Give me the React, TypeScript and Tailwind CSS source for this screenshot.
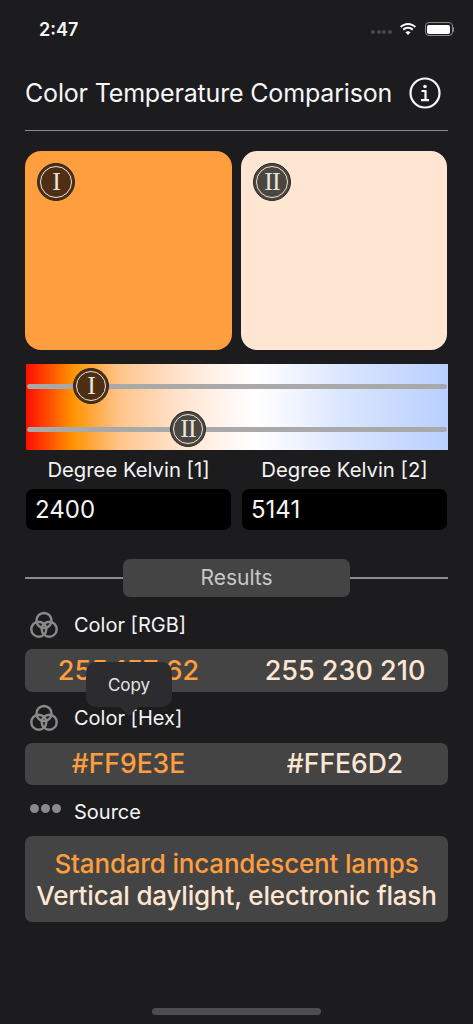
import { ReactNode } from 'react';

const ORANGE = 'text-[#ff9e3e]';
const CREAM = 'text-[#ffe6d2]';

function Badge({ label, size, bg }: { label: string; size: string; bg: string }) {
  return (
    <div className={`${size} ${bg} rounded-full border-[1.5px] border-[#2a2520] flex items-center justify-center shrink-0`}>
      <div className="w-[88%] h-[88%] rounded-full border-[1.5px] border-[#e8e4df] flex items-center justify-center">
        <span className="font-['Liberation_Serif',serif] text-[26px] leading-none text-[#e8e4df] tracking-[-1px]">{label}</span>
      </div>
    </div>
  );
}

function Swatch({ color, label, badge }: { color: string; label: string; badge: string }) {
  return (
    <div className={`h-[199px] rounded-[16px] ${color} pt-[12px] pl-[12px]`}>
      <Badge label={label} size="w-[38px] h-[38px]" bg={badge} />
    </div>
  );
}

function Slider({ label, left, badge }: { label: string; left: string; badge: string }) {
  return (
    <div className="relative h-[5px] rounded-full bg-[#a9a9a9] mx-[1px]">
      <div className={`absolute top-[-16px] ${left}`}>
        <Badge label={label} size="w-[36px] h-[36px]" bg={badge} />
      </div>
    </div>
  );
}

function VennIcon() {
  return (
    <svg width="28" height="28" viewBox="0 0 28 28" fill="none" stroke="#8a8a8a" strokeWidth="2.4">
      <circle cx="14" cy="9.500" r="7.500" />
      <circle cx="8.800" cy="18.200" r="7.500" />
      <circle cx="19.200" cy="18.200" r="7.500" />
    </svg>
  );
}

function DotsIcon() {
  return (
    <div className="flex gap-[2px] w-[32px] pb-[7px]">
      <div className="w-[9px] h-[9px] rounded-full bg-[#8a8a8a]" />
      <div className="w-[9px] h-[9px] rounded-full bg-[#8a8a8a]" />
      <div className="w-[9px] h-[9px] rounded-full bg-[#8a8a8a]" />
    </div>
  );
}

function SectionLabel({ icon, children, height }: { icon: ReactNode; children: ReactNode; height: string }) {
  return (
    <div className={`flex items-center ${height}`}>
      <div className="w-[49px] pl-[5px] flex items-center">{icon}</div>
      <span className="text-[20px] text-[#f4f4f4]">{children}</span>
    </div>
  );
}

function ValueRow({ left, right, height, size }: { left: string; right: string; height: string; size: string }) {
  return (
    <div className={`grid grid-cols-[207px_206px] justify-between items-center ${height} ${size} font-[450] rounded-[7px] bg-[#444444]`}>
      <span className={`${ORANGE} text-center`}>{left}</span>
      <span className={`${CREAM} text-center`}>{right}</span>
    </div>
  );
}

export default function App() {
  return (
    <div className="relative w-[473px] h-[1024px] bg-[#1c1c1e] overflow-hidden font-['Inter',sans-serif] text-white">
      {/* Status bar */}
      <div className="flex items-center justify-between h-[58px] pl-[39px] pr-[19px]">
        <span className="text-[18px] font-semibold text-[#f5f5f5]">2:47</span>
        <div className="flex items-center gap-[8px]">
          <div className="flex gap-[1.500px] mr-[-1px] mt-[5px]">
            {[0, 1, 2, 3].map((i) => (
              <div key={i} className="w-[4px] h-[4px] rounded-full bg-[#4a4a4c]" />
            ))}
          </div>
          <svg width="18" height="14" viewBox="0 0 19 14" fill="#ffffff">
            <path d="M9.500 2.900c2.700 0 5.100 1 7 2.800l1.400-1.500C15.700 2 12.700.7 9.500.7S3.300 2 1.100 4.200l1.400 1.500c1.900-1.800 4.300-2.800 7-2.800z" />
            <path d="M9.500 6.800c1.600 0 3.100.6 4.200 1.700l1.500-1.500C13.700 5.500 11.700 4.700 9.500 4.700S5.300 5.500 3.800 7l1.500 1.500C6.400 7.400 7.900 6.800 9.500 6.800z" />
            <path d="M9.500 13.300l2.700-2.900c-.7-.7-1.700-1.100-2.700-1.100s-2 .4-2.700 1.100z" />
          </svg>
          <div className="flex items-center">
            <div className="w-[28px] h-[14px] rounded-[4px] border border-[#8a8a8a] p-[1.500px]">
              <div className="w-full h-full rounded-[2px] bg-white" />
            </div>
            <div className="w-[1.500px] h-[5px] rounded-r bg-[#8a8a8a]" />
          </div>
        </div>
      </div>

      <div className="flex flex-col px-[25px]">
        {/* Title */}
        <div className="flex items-center justify-between h-[73px] border-b-[1.500px] border-[#8c8c8c]">
          <h1 className="text-[25px] tracking-[-0.17px] font-normal text-[#f7f7f7]">Color Temperature Comparison</h1>
          <svg width="32" height="32" viewBox="0 0 32 32" fill="none" stroke="#f7f7f7" className="mr-[7px] mb-[2px]">
            <circle cx="16" cy="16" r="14.500" strokeWidth="2.200" />
            <circle cx="16" cy="9.500" r="1.800" fill="#f7f7f7" stroke="none" />
            <path d="M12.500 14h4v9M12 23.200h8" strokeWidth="2.200" />
          </svg>
        </div>

        {/* Swatches */}
        <div className="grid grid-cols-[207px_206px] justify-between mt-[20px] mr-[1px]">
          <Swatch color="bg-[#ff9e3e]" label="I" badge="bg-[#4f2f13]" />
          <Swatch color="bg-[#ffe6d2]" label="II" badge="bg-[#4b463f]" />
        </div>

        {/* Gradient sliders */}
        <div className="relative flex flex-col justify-between h-[86px] mt-[14px] ml-[1px] pt-[20px] pb-[18px] bg-[linear-gradient(to_right,#ff0d00_0%,#ff9200_11%,#ffc48a_22%,#ffe3cc_36%,#fff6f2_48%,#ffffff_55%,#dbe6ff_75%,#b8cfff_100%)]">
          <Slider label="I" left="left-[46px]" badge="bg-[#4f2f13]" />
          <Slider label="II" left="left-[143px]" badge="bg-[#4b463f]" />
        </div>

        {/* Kelvin inputs */}
        <div className="grid grid-cols-[205px_205px] justify-between mx-[1px] mt-[7px]">
          <span className="text-center text-[20.300px] leading-[26px] text-[#f4f4f4]">Degree Kelvin [1]</span>
          <span className="text-center text-[20.300px] leading-[26px] text-[#f4f4f4]">Degree Kelvin [2]</span>
          <div className="mt-[6px] h-[41px] rounded-[7px] bg-black pl-[9px] flex items-center text-[24px] text-[#f4f4f4]">2400</div>
          <div className="mt-[6px] h-[41px] rounded-[7px] bg-black pl-[9px] flex items-center text-[24px] text-[#f4f4f4]">5141</div>
        </div>

        {/* Results divider */}
        <div className="flex items-center mt-[29px]">
          <div className="flex-1 h-[1.500px] bg-[#8c8c8c]" />
          <div className="w-[227px] h-[38px] rounded-[7px] bg-[#444444] flex items-center justify-center text-[21px] text-[#c8c8c8]">
            Results
          </div>
          <div className="flex-1 h-[1.500px] bg-[#8c8c8c]" />
        </div>

        <div className="relative">
          <SectionLabel icon={<VennIcon />} height="h-[52px] pt-[3px]">Color [RGB]</SectionLabel>
          <ValueRow left="255 157 62" right="255 230 210" height="h-[43px] pt-[1px]" size="text-[27px]" />
          <SectionLabel icon={<VennIcon />} height="h-[51px] pt-[1px]">Color [Hex]</SectionLabel>
          <ValueRow left="#FF9E3E" right="#FFE6D2" height="h-[42px]" size="text-[26.500px]" />
          <SectionLabel icon={<DotsIcon />} height="h-[51px] pt-[2px]">Source</SectionLabel>

          {/* Copy tooltip */}
          <div className="absolute left-[61px] top-[65px] w-[86px] h-[45px] rounded-[10px] bg-[#2c2c2e] flex items-center justify-center text-[17px] text-[#e5e5e5]">
            <div className="absolute left-[36px] bottom-[-6px] w-[14px] h-[14px] rotate-45 bg-[#2c2c2e]" />
            <span className="relative top-[1px]">Copy</span>
          </div>
        </div>

        <div className="flex flex-col items-center justify-center h-[86px] pt-[1px] rounded-[7px] bg-[#444444] text-[26px] font-[450] tracking-[-0.18px] leading-[32px]">
          <span className={ORANGE}>Standard incandescent lamps</span>
          <span className={CREAM}>Vertical daylight, electronic flash</span>
        </div>
      </div>

      {/* Home indicator */}
      <div className="absolute left-[152px] bottom-[9px] w-[169px] h-[7px] rounded-full bg-[#4d4d4f]" />
    </div>
  );
}
